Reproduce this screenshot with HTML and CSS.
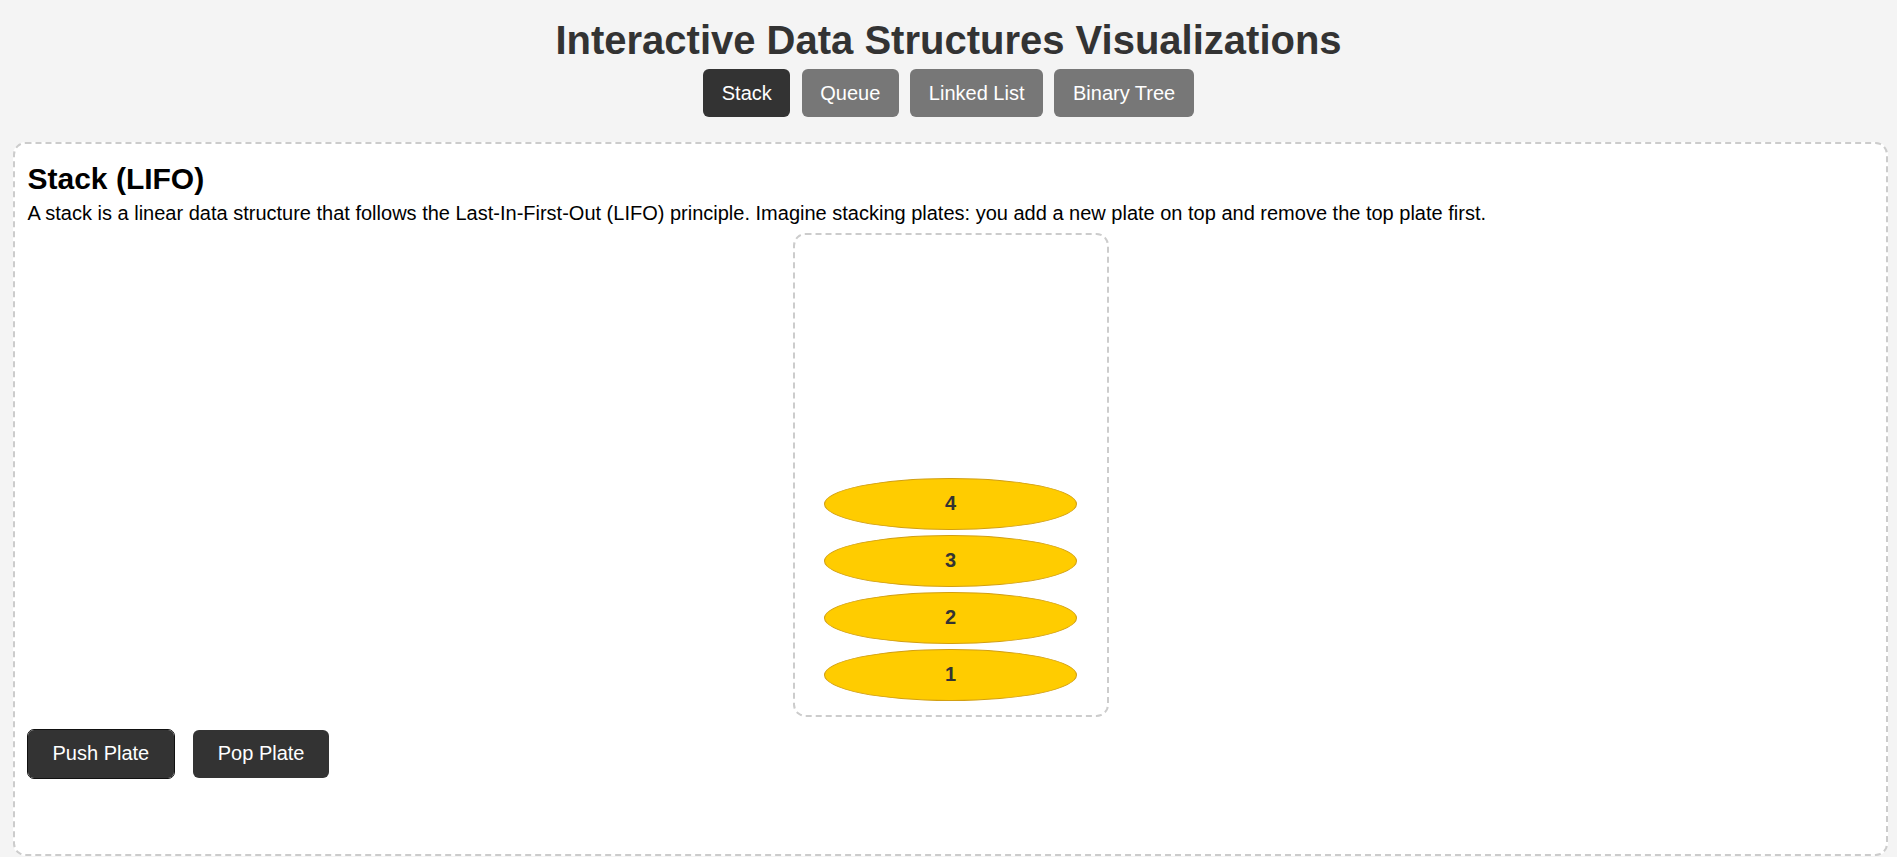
FILE: index.html
```html
<!DOCTYPE html>
<html lang="en">
<head>
    <meta charset="UTF-8">
    <meta name="viewport" content="width=device-width, initial-scale=1.0">
    <title>Interactive Data Structures Visualizations</title>
    <link rel="stylesheet" href="styles.css">
</head>
<body>
    <header class="top">
        <h1 class="title">Interactive Data Structures Visualizations</h1>
        <nav class="tabs">
            <button class="tab active">Stack</button>
            <button class="tab">Queue</button>
            <button class="tab">Linked List</button>
            <button class="tab">Binary Tree</button>
        </nav>
    </header>

    <section class="panel">
        <h2 class="panel-title">Stack (LIFO)</h2>
        <p class="panel-text">A stack is a linear data structure that follows the Last-In-First-Out (LIFO) principle. Imagine stacking plates: you add a new plate on top and remove the top plate first.</p>

        <div class="stack-box" id="stack">
            <div class="plate">1</div>
            <div class="plate">2</div>
            <div class="plate">3</div>
            <div class="plate">4</div>
        </div>

        <div class="controls">
            <button class="action focused" id="push">Push Plate</button>
            <button class="action" id="pop">Pop Plate</button>
        </div>
    </section>

    <script>
        const stack = document.getElementById("stack");
        let count = stack.children.length;

        // add a plate on top
        document.getElementById("push").addEventListener("click", () => {
            if (count >= 8) return;
            count++;
            const plate = document.createElement("div");
            plate.className = "plate";
            plate.textContent = count;
            stack.appendChild(plate);
        });

        // remove the top plate
        document.getElementById("pop").addEventListener("click", () => {
            if (count === 0) return;
            stack.lastElementChild.remove();
            count--;
        });
    </script>
</body>
</html>
```

FILE: styles.css
```css
body{
    margin: 0;
    background-color: #f4f4f4;
    font-family: "Liberation Sans", Arial, sans-serif;
    font-size: 20px;
    color: #000;
}

.top{
    padding-top: 17px;
    text-align: center;
}

.title{
    margin: 0;
    font-size: 40px;
    line-height: 46px;
    color: #333;
}

.tabs{
    display: flex;
    justify-content: center;
    gap: 11.5px;
    margin-top: 6px;
}

.tab{
    padding: 12.5px 18.5px;
    border: none;
    border-radius: 6px;
    background-color: #777;
    color: #fff;
    font-family: inherit;
    font-size: 20px;
    line-height: 23px;
    cursor: pointer;
}
.tab.active{
    background-color: #333;
}

.panel{
    box-sizing: border-box;
    height: 714px;
    margin: 25px 9px 0 13px;
    padding: 12.5px;
    background-color: #fff;
    border: 2px dashed #ccc;
    border-radius: 12.5px;
}

.panel-title{
    margin: 5px 0 6px;
    font-size: 30px;
    line-height: 34.5px;
}

.panel-text{
    margin: 0;
    line-height: 23px;
}

.stack-box{
    box-sizing: border-box;
    width: 316px;
    height: 484px;
    margin: 8px auto 0;
    padding-bottom: 14px;
    border: 2px dashed #ccc;
    border-radius: 12.5px;
    display: flex;
    flex-direction: column-reverse;
    align-items: center;
    gap: 4.5px;
}

.plate{
    box-sizing: border-box;
    width: 253px;
    height: 52.5px;
    flex-shrink: 0;
    border: 1.5px solid #d29f12;
    border-radius: 50%;
    background-color: #ffcc00;
    color: #333;
    font-weight: bold;
    display: flex;
    align-items: center;
    justify-content: center;
}

.controls{
    display: flex;
    gap: 18.5px;
    margin-top: 12.5px;
}

.action{
    padding: 12.5px 25px;
    border: none;
    border-radius: 6px;
    background-color: #333;
    color: #fff;
    font-family: inherit;
    font-size: 20px;
    line-height: 23px;
    cursor: pointer;
}
.action.focused{
    outline: 1.5px solid #111;
}
```
